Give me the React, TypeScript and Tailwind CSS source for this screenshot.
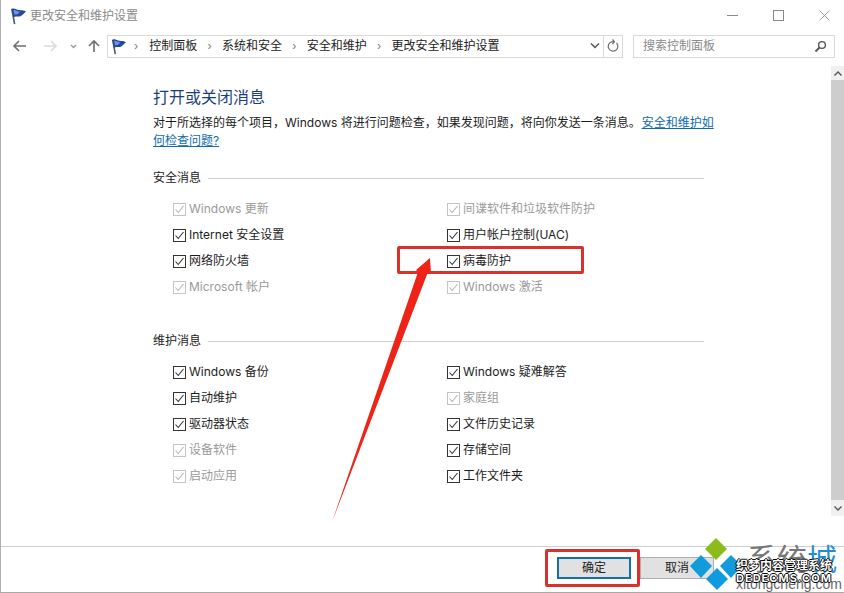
const font = { fontFamily: 'Inter, "Noto Sans CJK SC", sans-serif' };

function Flag({ size = 18 }: { size?: number }) {
  return (
    <svg width={size} height={size} viewBox="0 0 18 18" className="shrink-0">
      <path d="M2 2 L3.6 1.5 L6.4 17 L4.8 17.3 Z" fill="#4f586b" />
      <path d="M2.6 2 C5 0.4 7.5 2.6 10 3 C12.5 3.4 14.5 3 17 4.6 C15 6 14 8 11.5 9.2 C9 10.3 6.5 8.6 4.4 10.4 Z" fill="#23479b" />
      <path d="M4.5 3 C7 2.6 8.5 5 11.5 4.6 L8 7.5 L5.2 7.6 Z" fill="#6f94df" />
    </svg>
  );
}

function Check({ label, off }: { label: string; off?: boolean }) {
  return (
    <div className={`flex h-[26px] items-center gap-[3px] text-[12px] ${off ? "text-[#9a9a9a]" : "text-[#1c1c1c]"}`}>
      <span className={`flex h-[13px] w-[13px] shrink-0 items-center justify-center border ${off ? "border-[#c4c4c4]" : "border-[#333333]"}`}>
        <svg width="11" height="11" viewBox="0 0 11 11" fill="none">
          <path d="M1.5 5.5 L4.2 8.5 L9.5 2" stroke={off ? "#b5b5b5" : "#333333"} strokeWidth="1.1" />
        </svg>
      </span>
      <span>{label}</span>
    </div>
  );
}

function Section({ title, left, right, className }: { title: string; left: [string, boolean?][]; right: [string, boolean?][]; className?: string }) {
  return (
    <section className={className}>
      <div className="flex items-center gap-[7px] text-[12px] text-[#222222]">
        <span>{title}</span>
        <div className="h-px w-[496px] bg-[#cfcfcf]" />
      </div>
      <div className="mt-[9px] grid grid-cols-[274px_1fr] pl-[20px]">
        <div>{left.map(([l, o]) => <Check key={l} label={l} off={o} />)}</div>
        <div>{right.map(([l, o]) => <Check key={l} label={l} off={o} />)}</div>
      </div>
    </section>
  );
}

function Crumb({ label }: { label: string }) {
  return (
    <>
      <span className="ml-[10.25px] text-[11px] text-[#777777]">›</span>
      <span className="ml-[10.25px]">{label}</span>
    </>
  );
}

function Watermark() {
  const outline = "text-white [text-shadow:1px_0_0_#000,-1px_0_0_#000,0_1px_0_#000,0_-1px_0_#000]";
  return (
    <div className="absolute bottom-0 right-0 h-[60px] w-[156px] whitespace-nowrap">
      <svg width="156" height="60" viewBox="0 0 156 60" className="absolute left-0 top-0">
        <path d="M28 5 L39 16 L28 27 L17 16 Z" fill="#8cbb1e" />
        <path d="M13 22 L24 33 L13 45 L2 33 Z" fill="#0f9bdc" />
        <path d="M43 22 L54 33 L43 45 L32 33 Z" fill="#0f9bdc" />
        <path d="M29 35 L40 46 L29 57 L18 46 Z" fill="#0f9bdc" />
      </svg>
      <span className="absolute left-[59px] top-[10px] text-[30px] leading-[32px] text-[#777777]">系统<span className="text-[#1f8fd1]">城</span></span>
      <span className="absolute left-[48px] top-[44px] font-['Liberation_Sans'] text-[14px] leading-[14px] text-[#666666]">xitongcheng.com</span>
      <span className={`absolute left-[48px] top-[26px] text-[12px] font-bold leading-[14px] ${outline}`}>织梦内容管理系统</span>
      <span className={`absolute left-[48px] top-[40px] text-[11px] font-bold leading-[11px] tracking-[1px] ${outline}`}>DEDECMS.COM</span>
    </div>
  );
}

export default function App() {
  return (
    <div style={font} className="relative flex h-[593px] w-[844px] flex-col overflow-hidden bg-white">
      <header className="flex h-[31px] items-center pl-[9px] pr-[14px]">
        <Flag />
        <span className="ml-[3px] text-[12px] text-[#8a8a8a]">更改安全和维护设置</span>
        <div className="ml-auto flex items-center gap-[35px]">
          <div className="h-px w-[11px] bg-[#8a8a8a]" />
          <div className="h-[11px] w-[11px] border border-[#8a8a8a]" />
          <svg width="11" height="11" viewBox="0 0 11 11"><path d="M0.5 0.5 L10.5 10.5 M10.5 0.5 L0.5 10.5" stroke="#8a8a8a" strokeWidth="0.8" /></svg>
        </div>
      </header>

      <nav className="flex h-[30px] items-center pl-[12px] pr-[9px]">
        <svg width="98" height="16" viewBox="0 0 98 16" fill="none" className="shrink-0">
          <path d="M2 8 H14 M7 3 L2 8 L7 13" stroke="#6f6f6f" strokeWidth="1.6" />
          <path d="M32 8 H44 M39 3 L44 8 L39 13" stroke="#dcdcdc" strokeWidth="1.6" />
          <path d="M59 7 L61.5 9.5 L64 7" stroke="#9a9a9a" strokeWidth="1.3" />
          <path d="M82 14 V3 M77 8 L82 3 L87 8" stroke="#6f6f6f" strokeWidth="1.6" />
        </svg>
        <div className="ml-[-3px] flex h-[23px] w-[516px] items-center border border-[#d9d9d9] pl-[2px] text-[12px] text-[#222222]">
          <Flag size={17} />
          <span className="ml-[7px] text-[11px] text-[#777777]">›</span>
          <span className="ml-[11px]">控制面板</span>
          <Crumb label="系统和安全" />
          <Crumb label="安全和维护" />
          <Crumb label="更改安全和维护设置" />
          <div className="ml-auto flex h-full items-center">
            <svg width="10" height="8" viewBox="0 0 10 8" fill="none"><path d="M1 1.5 L5 5.5 L9 1.5" stroke="#555555" strokeWidth="1.5" /></svg>
            <div className="ml-[3px] h-full w-px bg-[#d9d9d9]" />
            <svg width="18" height="14" viewBox="0 0 18 14" fill="none"><path d="M12.5 4 A4.8 4.8 0 1 1 7.5 2.8 L10 2.8 M8.5 0.5 L10.5 2.8 L8.5 5" stroke="#6f6f6f" strokeWidth="1.2" /></svg>
          </div>
        </div>
        <div className="ml-auto flex h-[23px] w-[202px] items-center justify-between border border-[#d9d9d9] pl-[9px] pr-[7px] text-[12px] text-[#8a8a8a]">
          <span>搜索控制面板</span>
          <svg width="13" height="13" viewBox="0 0 13 13" fill="none"><circle cx="8" cy="5" r="3.4" stroke="#555555" strokeWidth="1.4" /><path d="M5.5 7.5 L1.5 11.5" stroke="#555555" strokeWidth="1.8" /></svg>
        </div>
      </nav>

      <div className="flex h-[485px] min-h-0">
        <main className="flex-1 pl-[153px] pt-[25px]">
          <h1 className="text-[16px] font-normal leading-[22px] text-[#1b3f7a]">打开或关闭消息</h1>
          <p className="mt-[6px] w-[565px] text-[12px] leading-[18px] text-[#1c1c1c]">
            对于所选择的每个项目，Windows 将进行问题检查，如果发现问题，将向你发送一条消息。<a className="ml-px text-[#0f6cab] underline">安全和维护如何检查问题?</a>
          </p>
          <Section
            className="mt-[19px]"
            title="安全消息"
            left={[["Windows 更新", true], ["Internet 安全设置"], ["网络防火墙"], ["Microsoft 帐户", true]]}
            right={[["间谍软件和垃圾软件防护", true], ["用户帐户控制(UAC)"], ["病毒防护"], ["Windows 激活", true]]}
          />
          <Section
            className="mt-[32px]"
            title="维护消息"
            left={[["Windows 备份"], ["自动维护"], ["驱动器状态"], ["设备软件", true], ["启动应用", true]]}
            right={[["Windows 疑难解答"], ["家庭组", true], ["文件历史记录"], ["存储空间"], ["工作文件夹"]]}
          />
        </main>
        <div className="mt-[5px] flex h-[450px] w-[13px] flex-col">
          <div className="flex h-[14px] items-center justify-center bg-[#f0f0f0]">
            <svg width="8" height="5" viewBox="0 0 8 5" fill="none"><path d="M0.5 4.5 L4 1 L7.5 4.5" stroke="#555555" strokeWidth="1.4" /></svg>
          </div>
          <div className="flex-1 bg-[#cdcdcd]" />
          <div className="flex h-[16px] items-center justify-center bg-[#f0f0f0]">
            <svg width="8" height="5" viewBox="0 0 8 5" fill="none"><path d="M0.5 0.5 L4 4 L7.5 0.5" stroke="#555555" strokeWidth="1.4" /></svg>
          </div>
        </div>
      </div>

      <footer className="flex h-[47px] shrink-0 justify-end gap-[9px] border-y border-t-[#cfcfcf] border-b-[#a8a8a8] pr-[130px] pt-[10px] text-[12px] text-[#222222]">
        <button className="h-[22px] w-[74px] border-2 border-[#1a6ea8] bg-[#e1e1e1]">确定</button>
        <button className="h-[22px] w-[74px] border border-[#adadad] bg-[#e1e1e1]">取消</button>
      </footer>

      <div className="absolute left-0 top-0 h-full w-px bg-[#b0b0b0]" />
      <div className="absolute left-[397px] top-[246px] h-[28px] w-[187px] rounded-[2px] border-[3px] border-[#d9322d]" />
      <div className="absolute left-[545px] top-[549px] h-[38px] w-[95px] rounded-[2px] border-[3px] border-[#d9322d]" />
      <svg width="844" height="593" className="pointer-events-none absolute left-0 top-0">
        <path d="M332 522 L418 272 L416 270 L430 258 L431 274 L428 272 Z" fill="#ee2418" />
      </svg>
      <Watermark />
    </div>
  );
}
